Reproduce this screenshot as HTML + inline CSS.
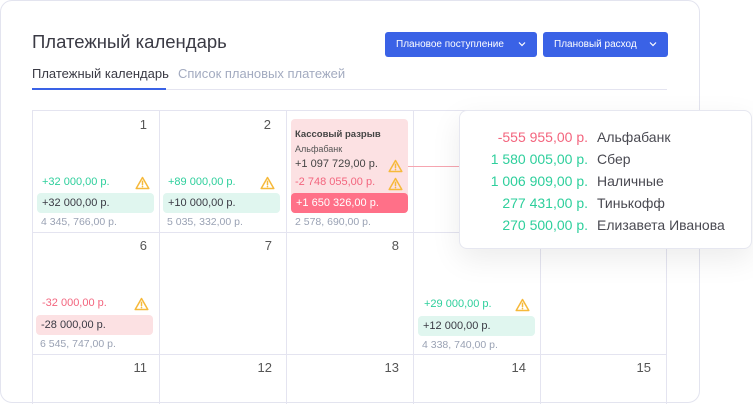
<!DOCTYPE html>
<html><head><meta charset="utf-8"><style>
*{margin:0;padding:0;box-sizing:border-box}
body{width:753px;height:404px;background:#fff;font-family:"Liberation Sans",sans-serif;position:relative;overflow:hidden;color:#3a3a44}
.a{position:absolute;white-space:nowrap}
.card{position:absolute;left:0;top:0;width:700px;height:403px;border:1px solid #e3e4ef;border-radius:12px;background:#fff}
.vl{position:absolute;top:110px;height:294px;width:1px;background:#e4e4f0}
.hl{position:absolute;left:32px;width:635px;height:1px;background:#e4e4f0}
.num{position:absolute;font-size:13px;color:#555;text-align:right;width:30px}
.s{font-size:11px}
.t{font-size:10.5px}
.g{color:#2ecf9c}.r{color:#f3657e}.gr{color:#9aa2b4}
.box{position:absolute;width:117px;height:20px;border-radius:4px;font-size:11px;line-height:20px;padding-left:5px;color:#3a3a44}
.bg{background:#e0f6ef}.bp{background:#fce1e3}
.btn{position:absolute;top:32px;height:25px;background:#3a62e6;border-radius:3px;color:#fff;font-size:10px;line-height:25px;padding-left:11px}
.btn svg{position:absolute;right:11px;top:9px}
.warn{position:absolute;width:15px;height:14px}
.tip{position:absolute;left:459px;top:110px;width:293px;height:139px;background:#fff;border:1px solid #e6e7f0;border-radius:8px;box-shadow:0 10px 30px rgba(0,0,0,0.08)}
.tr{position:absolute;font-size:14px;line-height:18px}
.amt{position:absolute;right:165px;text-align:right}
.nm{position:absolute;left:137px;color:#4a4a52}
</style></head><body>
<div class="card"></div>
<div class="a" style="left:32px;top:31px;font-size:18.5px;color:#3a3a44">Платежный календарь</div>
<div class="a" style="left:32px;top:66px;font-size:13px;color:#3a3a44">Платежный календарь</div>
<div class="a" style="left:178px;top:66px;font-size:13px;color:#a3abc0">Список плановых платежей</div>
<div class="a" style="left:32px;top:89px;width:635px;height:1px;background:#e4e4f0"></div>
<div class="a" style="left:32px;top:88px;width:134px;height:2px;background:#3a62e6"></div>
<div class="btn" style="left:385px;width:152px">Плановое поступление<svg width="8" height="6" viewBox="0 0 8 6"><path d="M1 1.5L4 4.5L7 1.5" stroke="#fff" stroke-width="1.2" fill="none"/></svg></div>
<div class="btn" style="left:543px;width:125px">Плановый расход<svg width="8" height="6" viewBox="0 0 8 6"><path d="M1 1.5L4 4.5L7 1.5" stroke="#fff" stroke-width="1.2" fill="none"/></svg></div>

<div class="vl" style="left:32px"></div><div class="vl" style="left:159px"></div><div class="vl" style="left:286px"></div><div class="vl" style="left:413px"></div><div class="vl" style="left:540px"></div><div class="vl" style="left:666px"></div>
<div class="hl" style="top:110px"></div><div class="hl" style="top:232px"></div><div class="hl" style="top:354px"></div>

<div class="num" style="left:117px;top:117px">1</div>
<div class="num" style="left:241px;top:117px">2</div>
<div class="num" style="left:117px;top:238px">6</div>
<div class="num" style="left:242px;top:238px">7</div>
<div class="num" style="left:369px;top:238px">8</div>
<div class="num" style="left:117px;top:360px">11</div>
<div class="num" style="left:242px;top:360px">12</div>
<div class="num" style="left:369px;top:360px">13</div>
<div class="num" style="left:496px;top:360px">14</div>
<div class="num" style="left:621px;top:360px">15</div>

<svg width="0" height="0" style="position:absolute"><defs><symbol id="w" viewBox="0 0 15 14"><path d="M7.5 1.5L13.8 12.5H1.2Z" fill="none" stroke="#f6b93b" stroke-width="1.5" stroke-linejoin="round"/><path d="M7.5 5.3V8.6" stroke="#f6b93b" stroke-width="1.5" stroke-linecap="round"/><circle cx="7.5" cy="10.6" r="0.8" fill="#f6b93b"/></symbol></defs></svg>

<!-- cell 1 -->
<div class="a s g" style="left:42px;top:176px">+32 000,00 р.</div>
<svg class="warn" style="left:135px;top:176px"><use href="#w"/></svg>
<div class="box bg" style="left:37px;top:193px">+32 000,00 р.</div>
<div class="a t gr" style="left:41px;top:216px">4 345, 766,00 р.</div>
<!-- cell 2 -->
<div class="a s g" style="left:168px;top:176px">+89 000,00 р.</div>
<svg class="warn" style="left:260px;top:176px"><use href="#w"/></svg>
<div class="box bg" style="left:163px;top:193px">+10 000,00 р.</div>
<div class="a t gr" style="left:167px;top:216px">5 035, 332,00 р.</div>
<!-- cell 3 -->
<div class="a" style="left:291px;top:119px;width:117px;height:94px;background:#fce1e3;border-radius:4px"></div>
<div class="a" style="left:408px;top:166px;width:51px;height:1px;background:#f6a5b0"></div>
<div class="a" style="left:295px;top:129px;font-size:9.5px;font-weight:bold;color:#444">Кассовый разрыв</div>
<div class="a" style="left:295px;top:144px;font-size:9px;color:#555">Альфабанк</div>
<div class="a s" style="left:295px;top:158px;color:#444">+1 097 729,00 р.</div>
<svg class="warn" style="left:388px;top:159px"><use href="#w"/></svg>
<div class="a s r" style="left:295px;top:176px">-2 748 055,00 р.</div>
<svg class="warn" style="left:388px;top:177px"><use href="#w"/></svg>
<div class="box" style="left:291px;top:193px;background:#ff7088;color:#fff">+1 650 326,00 р.</div>
<div class="a t gr" style="left:295px;top:216px">2 578, 690,00 р.</div>
<!-- cell 6 -->
<div class="a s r" style="left:42px;top:297px">-32 000,00 р.</div>
<svg class="warn" style="left:134px;top:297px"><use href="#w"/></svg>
<div class="box bp" style="left:36px;top:315px">-28 000,00 р.</div>
<div class="a t gr" style="left:40px;top:338px">6 545, 747,00 р.</div>
<!-- cell 9 -->
<div class="a s g" style="left:424px;top:298px">+29 000,00 р.</div>
<svg class="warn" style="left:515px;top:298px"><use href="#w"/></svg>
<div class="box bg" style="left:418px;top:316px">+12 000,00 р.</div>
<div class="a t gr" style="left:422px;top:339px">4 338, 740,00 р.</div>

<div class="tip">
<div class="tr" style="top:17px;width:293px"><span class="amt r">-555 955,00 р.</span><span class="nm">Альфабанк</span></div>
<div class="tr" style="top:39px;width:293px"><span class="amt g">1 580 005,00 р.</span><span class="nm">Сбер</span></div>
<div class="tr" style="top:61px;width:293px"><span class="amt g">1 006 909,00 р.</span><span class="nm">Наличные</span></div>
<div class="tr" style="top:83px;width:293px"><span class="amt g">277 431,00 р.</span><span class="nm">Тинькофф</span></div>
<div class="tr" style="top:105px;width:293px"><span class="amt g">270 500,00 р.</span><span class="nm">Елизавета Иванова</span></div>
</div>
</body></html>
